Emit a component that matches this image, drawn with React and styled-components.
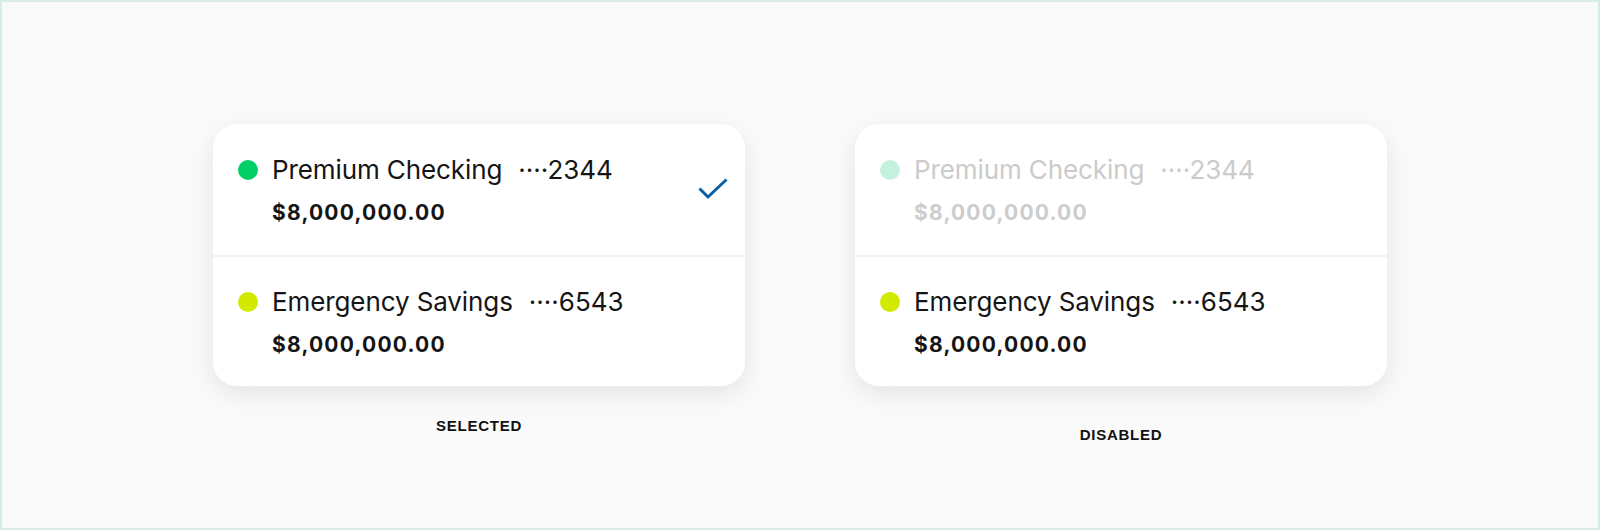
import React from "react";
import styled, { createGlobalStyle } from "styled-components";

const GlobalStyle = createGlobalStyle`
  html, body { margin: 0; padding: 0; background: #fafafa; }
  * { box-sizing: border-box; }
`;

const Frame = styled.div`
  width: 1600px;
  height: 530px;
  border: 2px solid #d9ede6;
  background: #fafafa;
  display: flex;
  justify-content: center;
  align-items: flex-start;
  gap: 110px;
  padding-top: 122px;
  font-family: Inter, "Liberation Sans", sans-serif;
`;

const Column = styled.div`
  display: flex;
  flex-direction: column;
  align-items: center;
`;

const Card = styled.div`
  width: 532px;
  height: 262px;
  background: #ffffff;
  border-radius: 24px;
  box-shadow: 0 8px 26px rgba(0, 0, 0, 0.09);
  display: flex;
  flex-direction: column;
  overflow: hidden;
`;

const Row = styled.div`
  display: flex;
  align-items: flex-start;
  padding: ${(p) => p.$pad};
  border-top: ${(p) => (p.$divider ? "2px solid #f1f1f1" : "none")};
  height: ${(p) => (p.$height ? `${p.$height}px` : "auto")};
  flex: ${(p) => (p.$height ? "none" : "1 1 auto")};
`;

const Info = styled.div`
  display: flex;
  flex-direction: column;
`;

const TitleLine = styled.div`
  display: flex;
  align-items: center;
  height: 32px;
`;

const Dot = styled.span`
  width: 20px;
  height: 20px;
  border-radius: 50%;
  background: ${(p) => p.$color};
  margin-right: 14px;
  margin-top: -1px;
  flex: none;
`;

const Name = styled.span`
  font-size: 26px;
  line-height: 32px;
  color: ${(p) => (p.$disabled ? "#cbcbcb" : "#151515")};
  letter-spacing: -0.1px;
`;

const Mask = styled.span`
  font-size: 26px;
  line-height: 32px;
  margin-left: 16px;
  color: ${(p) => (p.$disabled ? "#cbcbcb" : "#151515")};
`;

const Amount = styled.div`
  font-size: 21px;
  line-height: 26px;
  font-weight: 700;
  letter-spacing: 1.2px;
  margin-top: ${(p) => p.$gap}px;
  margin-left: 34px;
  color: ${(p) => (p.$disabled ? "#cdcdcd" : "#151515")};
`;

const Check = styled.svg`
  margin-left: auto;
  margin-top: 24px;
  flex: none;
`;

const Label = styled.div`
  font-family: "Liberation Sans", Arial, sans-serif;
  font-weight: 700;
  font-size: 15px;
  line-height: 18px;
  letter-spacing: 0.75px;
  color: #111;
  margin-top: ${(p) => p.$offset}px;
`;

function Account({ color, name, mask, amount, disabled, gap }) {
  return (
    <Info>
      <TitleLine>
        <Dot $color={color} />
        <Name $disabled={disabled}>{name}</Name>
        <Mask $disabled={disabled}>····{mask}</Mask>
      </TitleLine>
      <Amount $disabled={disabled} $gap={gap}>{amount}</Amount>
    </Info>
  );
}

function AccountCard({ selected, disabledFirst }) {
  return (
    <Card>
      <Row $pad="30px 17px 0 25px" $height={131}>
        <Account
          color={disabledFirst ? "#c5f2dc" : "#00cf66"}
          name="Premium Checking"
          mask="2344"
          amount="$8,000,000.00"
          disabled={disabledFirst}
          gap={14}
        />
        {selected && (
          <Check width="30" height="22" viewBox="0 0 30 22">
            <path
              d="M1.5 10.5 L10 19 L28.5 1.5"
              fill="none"
              stroke="#0a5fa5"
              strokeWidth="3"
              strokeLinecap="butt"
              strokeLinejoin="miter"
            />
          </Check>
        )}
      </Row>
      <Row $pad="29px 17px 0 25px" $divider>
        <Account
          color="#d2ea00"
          name="Emergency Savings"
          mask="6543"
          amount="$8,000,000.00"
          gap={14}
        />
      </Row>
    </Card>
  );
}

export default function App() {
  return (
    <>
      <GlobalStyle />
      <Frame>
        <Column>
          <AccountCard selected />
          <Label $offset={31}>SELECTED</Label>
        </Column>
        <Column>
          <AccountCard disabledFirst />
          <Label $offset={40}>DISABLED</Label>
        </Column>
      </Frame>
    </>
  );
}
